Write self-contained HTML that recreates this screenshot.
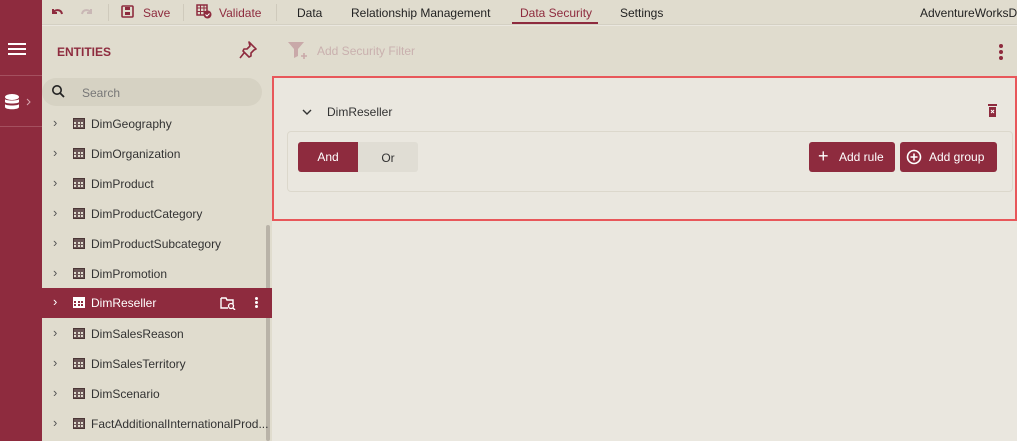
<!DOCTYPE html>
<html><head><meta charset="utf-8"><style>
*{box-sizing:border-box;margin:0;padding:0}
body{width:1017px;height:441px;overflow:hidden;background:#eae7df;font-family:"Liberation Sans",sans-serif;font-size:12px;color:#222;position:relative}
.abs{position:absolute}
.rail{left:0;top:0;width:42px;height:441px;background:#8e2b3e}
.top{left:42px;top:0;width:975px;height:25px;background:#e0dcce;border-bottom:1px solid #d4d0c3}
.top span{position:absolute;top:6px;font-size:12px}
.hdr{left:42px;top:26px;width:975px;height:50px;background:#e0dcce}
.panel{left:42px;top:76px;width:230px;height:365px;background:#e0dcce}
.row{position:absolute;left:0;width:230px;height:30px;font-size:12px;color:#333}
.row .ch{position:absolute;left:11px;top:6px;font-size:13px;color:#555}
.row .ic{position:absolute;left:31px;top:9px;width:12px;height:11px;border:1px solid #4a3535;background:#6a5555;
background-image:linear-gradient(#e0dcce,#e0dcce),linear-gradient(#e0dcce,#e0dcce),linear-gradient(#e0dcce,#e0dcce),linear-gradient(#e0dcce,#e0dcce),linear-gradient(#e0dcce,#e0dcce),linear-gradient(#e0dcce,#e0dcce);
background-size:2px 2px;background-repeat:no-repeat;
background-position:0 3px,4px 3px,7px 3px,0 6px,4px 6px,7px 6px}
.row .t{position:absolute;left:49px;top:8px}
.sel{background:#8e2b3e;color:#fff;width:230px}
.sel .ch{color:#fff}.sel .ic{border-color:#fff;background:#fff;background-image:linear-gradient(#8e2b3e,#8e2b3e),linear-gradient(#8e2b3e,#8e2b3e),linear-gradient(#8e2b3e,#8e2b3e),linear-gradient(#8e2b3e,#8e2b3e),linear-gradient(#8e2b3e,#8e2b3e),linear-gradient(#8e2b3e,#8e2b3e);background-size:2px 2px;background-repeat:no-repeat;background-position:0 3px,4px 3px,7px 3px,0 6px,4px 6px,7px 6px}
.btn{position:absolute;background:#8e2b3e;color:#fff;border-radius:3px;height:30px;font-size:12px;line-height:30px}
</style></head><body>
<div class="abs rail">
 <div class="abs" style="left:8px;top:43px;width:18px;height:2px;background:#fff;box-shadow:0 5px 0 #fff,0 10px 0 #fff"></div>
 <div class="abs" style="left:0;top:75px;width:42px;height:1px;background:#a4505f"></div>
 <svg class="abs" style="left:3px;top:94px" width="34" height="18"><ellipse cx="9" cy="3" rx="7" ry="3" fill="#fff"/><path d="M2 5v3c0 2 14 2 14 0V5c0 2-14 2-14 0zM2 10v3c0 3 14 3 14 0v-3c0 2-14 2-14 0z" fill="#fff"/><path d="M24 5l3 3-3 3" stroke="#d7a8b0" fill="none"/></svg>
 <div class="abs" style="left:0;top:126px;width:42px;height:1px;background:#a4505f"></div>
</div>
<div class="abs top">
 <svg class="abs" style="left:9px;top:7px" width="12" height="10"><path d="M2 2v4h4M2 6c2-4 8-4 9 1" stroke="#8e2b3e" stroke-width="2" fill="none"/></svg>
 <svg class="abs" style="left:39px;top:7px" width="12" height="10"><path d="M10 2v4H6M10 6C8 2 2 2 1 7" stroke="#c9b7b5" stroke-width="2" fill="none"/></svg>
 <div class="abs" style="left:66px;top:4px;width:1px;height:17px;background:#cfcabc"></div>
 <svg class="abs" style="left:79px;top:5px" width="13" height="13"><rect x="1" y="1" width="11" height="11" rx="1" fill="none" stroke="#8e2b3e" stroke-width="1.6"/><rect x="4" y="2" width="5" height="3" fill="#8e2b3e"/><rect x="4" y="7" width="5" height="3" fill="#8e2b3e"/></svg>
 <span style="left:101px;color:#8e2b3e">Save</span>
 <div class="abs" style="left:141px;top:4px;width:1px;height:17px;background:#cfcabc"></div>
 <svg class="abs" style="left:154px;top:4px" width="16" height="15"><rect x="1" y="1" width="10" height="10" fill="none" stroke="#8e2b3e" stroke-width="1.5"/><path d="M1 4h10M1 7.5h10M4.5 1v10M8 1v10" stroke="#8e2b3e"/><circle cx="11.5" cy="10.5" r="4" fill="#8e2b3e"/><path d="M9.5 10.5l1.5 1.5 2.5-2.5" stroke="#fff" fill="none"/></svg>
 <span style="left:177px;color:#8e2b3e">Validate</span>
 <div class="abs" style="left:234px;top:4px;width:1px;height:17px;background:#cfcabc"></div>
 <span style="left:255px">Data</span>
 <span style="left:309px">Relationship Management</span>
 <span style="left:478px;color:#8e2b3e">Data Security</span>
 <div class="abs" style="left:470px;top:22px;width:86px;height:2px;background:#8e2b3e"></div>
 <span style="left:578px">Settings</span>
 <span style="left:878px">AdventureWorksD</span>
</div>
<div class="abs hdr">
 <div class="abs" style="left:15px;top:19px;font-weight:bold;color:#8e2b3e;font-size:12px">ENTITIES</div>
 <svg class="abs" style="left:196px;top:14px" width="20" height="20"><path d="M11 2l7 7-2 1-3 3 0 3-2 1-6-6 1-2 3 0 3-3z M6 13l-4 5" stroke="#8e2b3e" stroke-width="1.6" fill="none" stroke-linejoin="round"/></svg>
 <svg class="abs" style="left:245px;top:14px" width="22" height="20"><path d="M1 2h16l-6 7v7l-4 2V9z" fill="#c9a9a9"/><path d="M17 13v6M14 16h6" stroke="#c9a9a9" stroke-width="1.6"/></svg>
 <div class="abs" style="left:275px;top:18px;color:#c9b0ae;font-size:12px">Add Security Filter</div>
 <div class="abs" style="left:957px;top:18px;width:4px;height:4px;border-radius:2px;background:#8e2b3e;box-shadow:0 6px 0 #8e2b3e,0 12px 0 #8e2b3e"></div>
</div>
<div class="abs panel">
 <div class="abs" style="left:0;top:2px;width:220px;height:28px;border-radius:14px;background:#d6d2c3"></div>
 <svg class="abs" style="left:9px;top:8px" width="14" height="14"><circle cx="6" cy="6" r="4.2" stroke="#222" stroke-width="1.6" fill="none"/><path d="M9 9l4 4" stroke="#222" stroke-width="1.8"/></svg>
 <div class="abs" style="left:40px;top:10px;color:#777">Search</div>
 <div class="abs" style="left:224px;top:149px;width:4px;height:216px;background:#b9b3a8;border-radius:2px"></div>
 <div class="row" style="top:33px"><span class="ch">›</span><span class="ic"></span><span class="t">DimGeography</span></div>
 <div class="row" style="top:63px"><span class="ch">›</span><span class="ic"></span><span class="t">DimOrganization</span></div>
 <div class="row" style="top:93px"><span class="ch">›</span><span class="ic"></span><span class="t">DimProduct</span></div>
 <div class="row" style="top:123px"><span class="ch">›</span><span class="ic"></span><span class="t">DimProductCategory</span></div>
 <div class="row" style="top:153px"><span class="ch">›</span><span class="ic"></span><span class="t">DimProductSubcategory</span></div>
 <div class="row" style="top:183px"><span class="ch">›</span><span class="ic"></span><span class="t">DimPromotion</span></div>
 <div class="row sel" style="top:212px"><span class="ch">›</span><span class="ic"></span><span class="t">DimReseller</span>
  <svg class="abs" style="left:178px;top:8px" width="16" height="14"><path d="M1 2h5l1 2h6v4M1 2v10h7" stroke="#fff" stroke-width="1.4" fill="none"/><circle cx="11" cy="10" r="2.5" stroke="#fff" stroke-width="1.3" fill="none"/><path d="M13 12l2 2" stroke="#fff" stroke-width="1.4"/></svg>
  <div class="abs" style="left:213px;top:9px;width:3px;height:3px;background:#fff;border-radius:2px;box-shadow:0 4px 0 #fff,0 8px 0 #fff"></div>
 </div>
 <div class="row" style="top:243px"><span class="ch">›</span><span class="ic"></span><span class="t">DimSalesReason</span></div>
 <div class="row" style="top:273px"><span class="ch">›</span><span class="ic"></span><span class="t">DimSalesTerritory</span></div>
 <div class="row" style="top:303px"><span class="ch">›</span><span class="ic"></span><span class="t">DimScenario</span></div>
 <div class="row" style="top:333px"><span class="ch">›</span><span class="ic"></span><span class="t">FactAdditionalInternationalProd...</span></div>
</div>
<div class="abs" style="left:272px;top:76px;width:745px;height:145px;border:2px solid #e8575a"></div>
<svg class="abs" style="left:302px;top:108px" width="10" height="8"><path d="M1 2l4 4 4-4" stroke="#333" stroke-width="1.4" fill="none"/></svg>
<div class="abs" style="left:327px;top:105px;color:#333">DimReseller</div>
<svg class="abs" style="left:987px;top:103px" width="12" height="15"><rect x="1" y="1" width="9" height="2" fill="#8e2b3e"/><rect x="2" y="4" width="7" height="10" fill="#8e2b3e"/><path d="M4 7l3 3M7 7l-3 3" stroke="#fff"/></svg>
<div class="abs" style="left:287px;top:131px;width:726px;height:61px;border:1px solid #dcd8cc;border-radius:4px"></div>
<div class="abs" style="left:298px;top:142px;width:120px;height:30px;border-radius:3px;background:#e0ddd4"></div>
<div class="btn" style="left:298px;top:142px;width:60px;text-align:center;border-radius:3px 0 0 3px">And</div>
<div class="abs" style="left:358px;top:151px;width:60px;text-align:center;color:#333">Or</div>
<div class="btn" style="left:809px;top:142px;width:86px"><span style="position:absolute;left:9px;font-size:18px;top:-1px">+</span><span style="position:absolute;left:30px">Add rule</span></div>
<div class="btn" style="left:900px;top:142px;width:97px"><svg style="position:absolute;left:6px;top:7px" width="16" height="16"><circle cx="8" cy="8" r="6.5" stroke="#fff" stroke-width="1.6" fill="none"/><path d="M8 4.5v7M4.5 8h7" stroke="#fff" stroke-width="1.6"/></svg><span style="position:absolute;left:29px">Add group</span></div>
</body></html>
